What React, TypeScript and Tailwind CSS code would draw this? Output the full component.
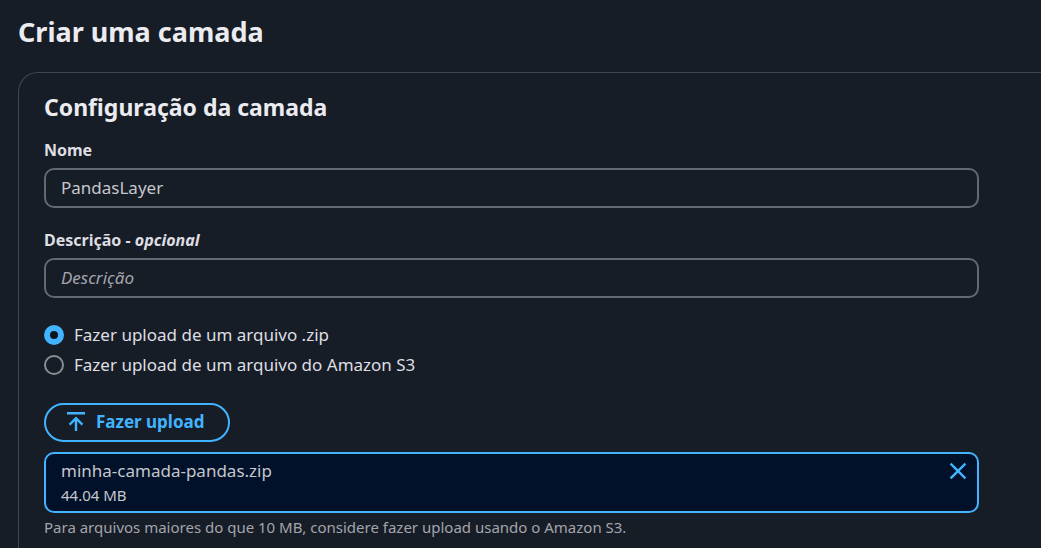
import { useState } from "react";

const field =
  "h-10 w-full rounded-[10px] border-2 border-[#656871] bg-[#161d26] px-[15px] pb-[2px] text-[17px] leading-6 text-[#c6c6cd] outline-none placeholder:italic placeholder:text-[#a4a4ad]";

function Radio({ id, label, checked, onChange }: { id: string; label: string; checked: boolean; onChange: () => void }) {
  return (
    <label htmlFor={id} className="flex h-[30px] items-center gap-[10px] text-[17px] text-[#dedee3]">
      <input
        id={id}
        type="radio"
        name="source"
        checked={checked}
        onChange={onChange}
        className="size-5 appearance-none rounded-full border-2 border-[#8c8c94] bg-[#161d26] checked:border-[6px] checked:border-[#42b4ff] checked:bg-[#0f141a]"
      />
      {label}
    </label>
  );
}

export default function App() {
  const [name, setName] = useState("PandasLayer");
  const [source, setSource] = useState("zip");
  const [hasFile, setHasFile] = useState(true);
  return (
    <main className="h-screen overflow-hidden bg-[#161d26] pt-4 pl-[18px] font-['Noto_Sans',sans-serif] text-[#ebebf0]">
      <h1 className="text-[27px] leading-8 font-bold">Criar uma camada</h1>
      <section className="mt-6 h-screen rounded-tl-[20px] border-t border-l border-[#424650] pt-4 pr-[62px] pl-[25px]">
        <h2 className="text-[23px] leading-9 font-bold">Configuração da camada</h2>
        <label htmlFor="name" className="mt-[13px] block text-[16px] leading-6 font-bold text-[#dedee3]">Nome</label>
        <input id="name" value={name} onChange={(e) => setName(e.target.value)} className={`mt-[6px] ${field}`} />
        <label htmlFor="desc" className="mt-5 block text-[16px] leading-6 font-bold text-[#dedee3]">
          Descrição - <i>opcional</i>
        </label>
        <input id="desc" placeholder="Descrição" className={`mt-[6px] ${field}`} />
        <div className="mt-[22px]">
          <Radio id="zip" label="Fazer upload de um arquivo .zip" checked={source === "zip"} onChange={() => setSource("zip")} />
          <Radio id="s3" label="Fazer upload de um arquivo do Amazon S3" checked={source === "s3"} onChange={() => setSource("s3")} />
        </div>
        <button type="button" className="mt-[23px] flex h-[39px] items-center gap-[10px] rounded-full border-2 border-[#42b4ff] pr-6 pb-[2px] pl-5 text-[17px] font-bold text-[#42b4ff]">
          <svg className="size-5" viewBox="0 0 20 20" fill="none" stroke="currentColor" strokeWidth="2.4">
            <path d="M1 1.3H19M10 19V6.5M3.6 12.6L10 6.2L16.4 12.6" />
          </svg>
          Fazer upload
        </button>
        {hasFile && (
          <div className="mt-[10px] flex items-start justify-between rounded-[10px] border-2 border-[#42b4ff] bg-[#001129] pt-[3px] pr-[9px] pb-[6px] pl-[15px]">
            <div className="text-[#c6c6cd]">
              <p className="text-[17px] leading-7">minha-camada-pandas.zip</p>
              <p className="text-[15px] leading-5">44.04 MB</p>
            </div>
            <button type="button" aria-label="Remover arquivo" onClick={() => setHasFile(false)} className="mt-1 text-[#42b4ff]">
              <svg className="size-5" viewBox="0 0 20 20" fill="none" stroke="currentColor" strokeWidth="2.4">
                <path d="M2.6 2.6L17.4 17.4M17.4 2.6L2.6 17.4" />
              </svg>
            </button>
          </div>
        )}
        <p className="mt-1 text-[15px] leading-5 text-[#a4a4ad]">Para arquivos maiores do que 10 MB, considere fazer upload usando o Amazon S3.</p>
      </section>
    </main>
  );
}
